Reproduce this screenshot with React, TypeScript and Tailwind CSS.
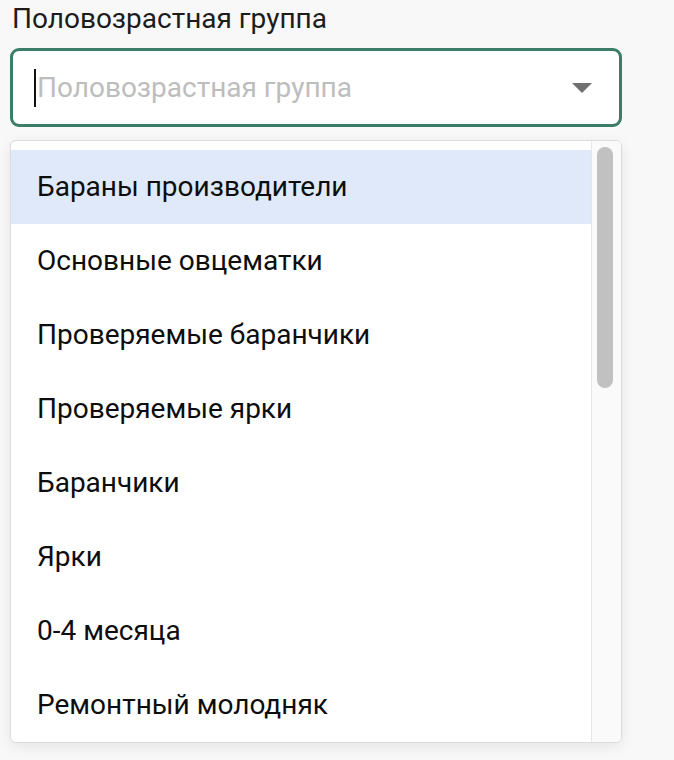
const items = [
  'Бараны производители',
  'Основные овцематки',
  'Проверяемые баранчики',
  'Проверяемые ярки',
  'Баранчики',
  'Ярки',
  '0-4 месяца',
  'Ремонтный молодняк',
];

export default function App() {
  return (
    <div className="min-h-[760px] w-[674px] bg-[#f8f8f8] pt-1 pl-[10px] font-['Roboto',sans-serif]">
      <div className="pl-[2px] text-[28px] leading-[30px] text-[#1c1c1c]">Половозрастная группа</div>

      <div className="mt-[14px] flex h-[79px] w-[612px] items-center rounded-[9px] border-[3px] border-[#3b7d66] bg-white pr-[27px] pl-[21px]">
        <span className="h-[38px] w-[2px] bg-[#111]" />
        <span className="ml-[1px] flex-1 text-[28px] leading-[30px] text-[#bdbdbd]">Половозрастная группа</span>
        <svg width="20" height="10" viewBox="0 0 20 10" className="mt-[1px]">
          <path d="M0 0 L20 0 L10 10 Z" fill="#707070" />
        </svg>
      </div>

      <div className="mt-[13px] flex h-[603px] w-[612px] overflow-hidden rounded-[6px] border border-[#dcdcdc] bg-white shadow-[0_4px_14px_rgba(0,0,0,0.08)]">
        <ul className="flex-1 pt-[9px]">
          {items.map((label, i) => (
            <li
              key={label}
              className={`flex h-[74px] items-center pl-[26px] text-[28px] leading-[30px] text-[#0d0d0d] ${i === 0 ? 'bg-[#dfe9f9]' : ''}`}
            >
              {label}
            </li>
          ))}
        </ul>
        <div className="w-[30px] border-l border-[#e6e6e6] bg-[#fafafa] pt-[6px] pl-[5px]">
          <div className="h-[241px] w-[16px] rounded-full bg-[#c1c1c1]" />
        </div>
      </div>
    </div>
  );
}
